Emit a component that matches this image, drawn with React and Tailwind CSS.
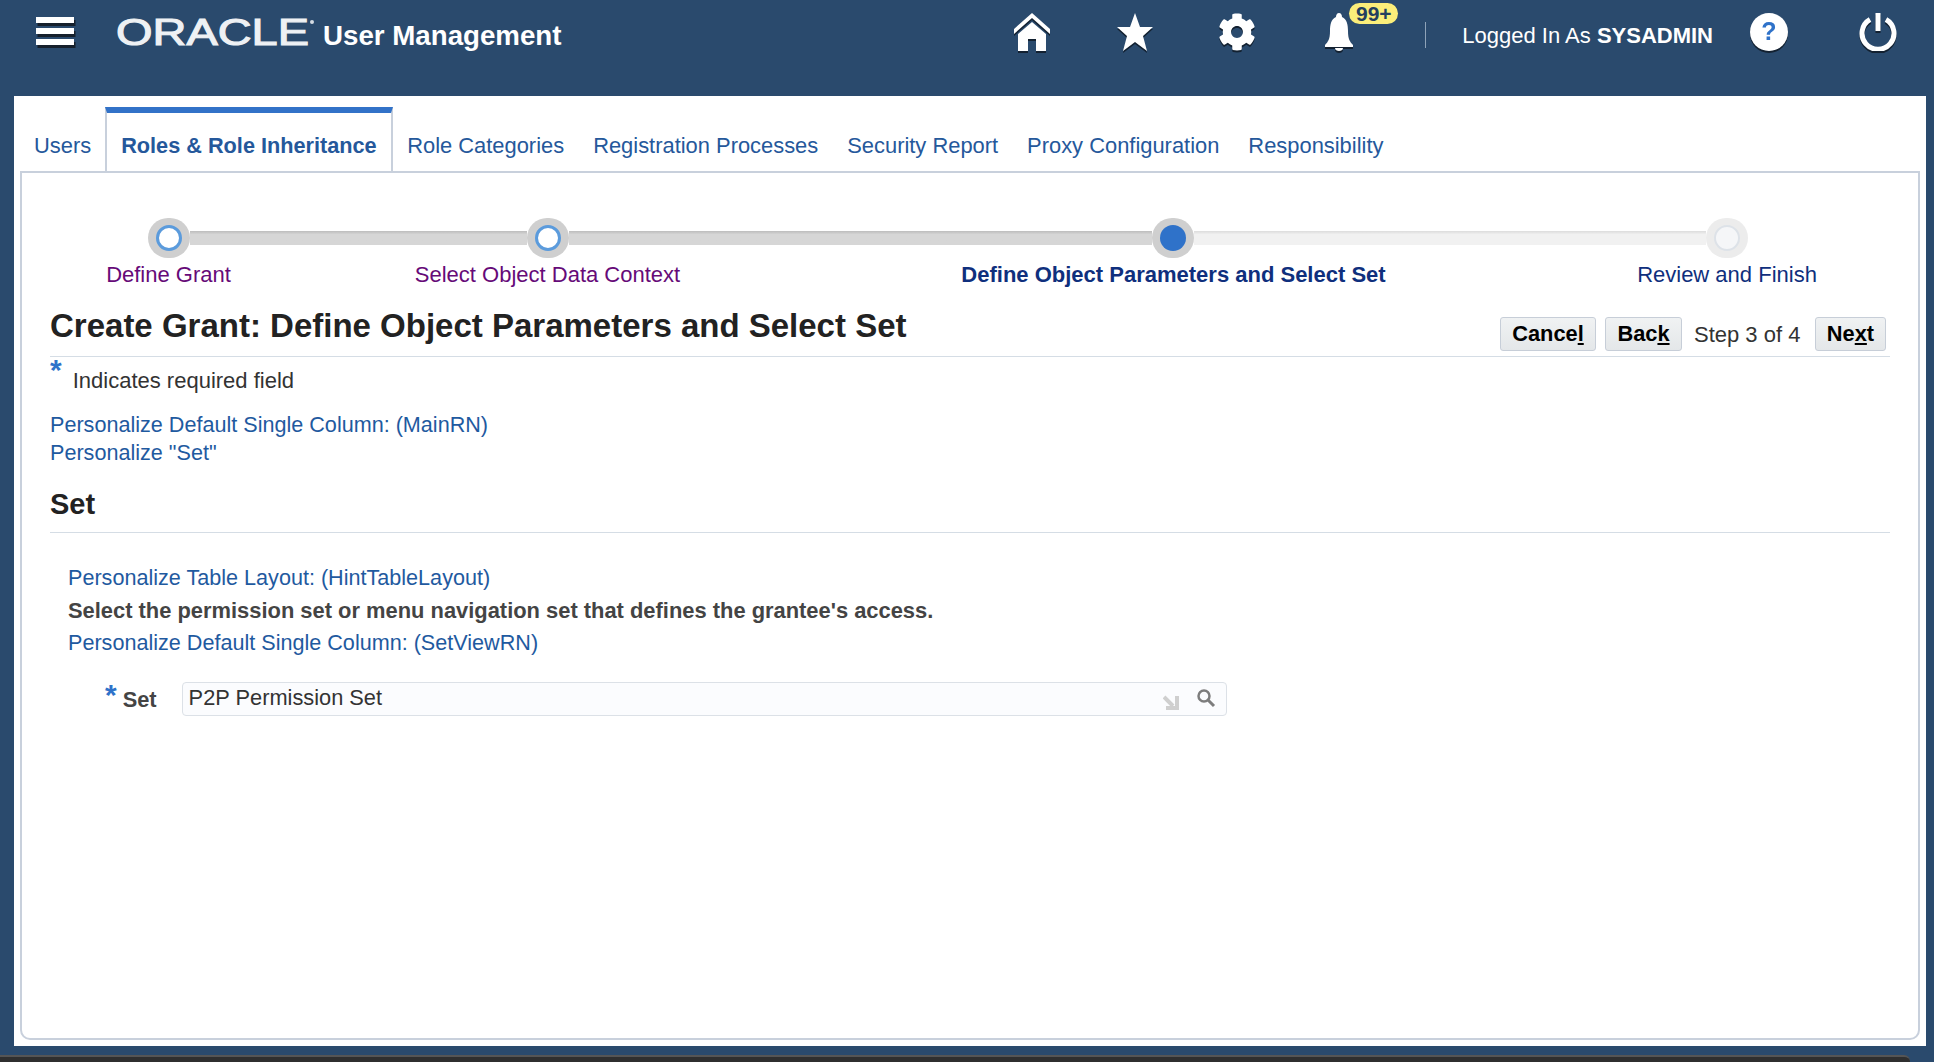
import React from "react";
import { FaCog } from "react-icons/fa";

const tabs = ["Users", "Roles & Role Inheritance", "Role Categories", "Registration Processes", "Security Report", "Proxy Configuration", "Responsibility"];

const Dot = ({ kind }) => (
  <div className={`flex h-[40px] w-[42px] shrink-0 items-center justify-center rounded-full ${kind === "todo" ? "bg-[#ececec]" : "bg-[#cfcfcf]"}`}>
    {kind === "done" && <div className="h-[26px] w-[26px] rounded-full border-[3px] border-[#5b9bdc] bg-white" />}
    {kind === "current" && <div className="h-[26px] w-[26px] rounded-full bg-[#2f72c9]" />}
    {kind === "todo" && <div className="h-[26px] w-[26px] rounded-full border-2 border-[#dde2e8] bg-[#f5f6f8]" />}
  </div>
);

const Line = ({ width, light }) => (
  <div
    className={`h-[14px] ${width} ${
      light ? "bg-gradient-to-b from-[#dcdcdc] to-[#f1f1f1] to-25%" : "bg-gradient-to-b from-[#bcbcbc] to-[#d6d6d6] to-25%"
    }`}
  />
);

const Btn = ({ children, className }) => (
  <button className={`flex h-[34px] items-center justify-center rounded-[3px] border border-[#c7ced8] bg-gradient-to-b from-[#f0f2f3] to-[#e4e7e9] text-[21.8px] font-bold text-black ${className}`}>
    {children}
  </button>
);

const Star = ({ className }) => <span className={`font-bold leading-none text-[#2f72c9] ${className}`}>*</span>;

const Link = ({ children }) => <div className="text-[21.6px] leading-[27.7px] text-[#1f5aa0]">{children}</div>;

export default function App() {
  return (
    <div className="flex h-[1062px] w-full flex-col overflow-hidden bg-[#2a4a6d] font-['Liberation_Sans',Arial,sans-serif]">
      {/* top bar */}
      <header className="flex h-[96px] shrink-0 items-start text-white">
        <svg width="42" height="32" viewBox="0 0 42 32" className="ml-[35px] mt-[16px] shrink-0">
          <path d="M1 3h38v6H1zM1 14h38v6H1zM1 25h38v6H1z" fill="#16202c" transform="translate(1.5 1)" />
          <path d="M1 1h38v6H1zM1 12h38v6H1zM1 23h38v6H1z" fill="#fff" />
        </svg>
        <svg width="200" height="44" viewBox="0 0 200 44" className="ml-[39px] mt-[17px] shrink-0 overflow-visible">
          <text x="0" y="28" textLength="193" lengthAdjust="spacingAndGlyphs" fontSize="37" fill="#eef1f4" stroke="#eef1f4" strokeWidth="1.1" fontFamily="'Liberation Sans', sans-serif">
            ORACLE
          </text>
          <circle cx="196" cy="5" r="2" fill="#d5dbe2" />
        </svg>
        <div className="ml-[7px] mt-[20px] text-[27.7px] font-bold leading-[32px]">User Management</div>

        <div className="ml-auto flex h-[52px] items-start pt-[13px]">
          <svg width="38" height="40" viewBox="0 0 38 40" className="drop-shadow-[0_2px_0_rgba(0,0,0,0.55)]">
            <path d="M19 0 37 16v5L19 5 1 21v-5z" fill="#fff" />
            <path d="M19 9 33 21v17H23V26h-8v12H5V21z" fill="#fff" />
          </svg>
          <svg width="38" height="40" viewBox="0 0 38 40" className="ml-[65px] drop-shadow-[0_2px_0_rgba(0,0,0,0.55)]">
            <path d="M19 0 24 14H37L27 23 31 38 19 29 7 38 11 23 1 14H14z" fill="#fff" />
          </svg>
          <FaCog className="ml-[64px] h-[38px] w-[38px] text-white drop-shadow-[0_2px_0_rgba(0,0,0,0.55)]" />
          <div className="relative ml-[67px] w-[32px]">
            <svg width="32" height="38" viewBox="0 0 32 38" className="drop-shadow-[0_2px_0_rgba(0,0,0,0.55)]">
              <path d="M16 0c2 0 3 2 3 4 5 2 6 8 6 14 0 8 2 11 5 14v2H2v-2c3-3 5-6 5-14 0-6 1-12 6-14 0-2 1-4 3-4z" fill="#fff" />
              <path d="M12 35h8c0 2-2 3-4 3s-4-1-4-3z" fill="#fff" />
            </svg>
            <div className="absolute left-[26px] top-[-10px] flex h-[21px] w-[49px] items-center justify-center rounded-full bg-[#fbee7a] text-[21px] font-bold text-[#24405f]">
              99+
            </div>
          </div>
          <div className="ml-[70px] mt-[9px] h-[26px] w-px bg-[#8fa3b8]" />
          <div className="ml-[36px] mt-[10px] text-[22px] leading-[26px]">
            Logged In As <span className="font-bold">SYSADMIN</span>
          </div>
          <div className="ml-[37px] flex h-[38px] w-[38px] items-center justify-center rounded-full bg-white text-[25px] font-bold text-[#2f72c9] drop-shadow-[0_2px_0_rgba(0,0,0,0.55)]">
            ?
          </div>
          <svg width="38" height="38" viewBox="0 0 38 38" className="ml-[71px] mr-[37px] drop-shadow-[0_2px_0_rgba(0,0,0,0.55)]">
            <path d="M11 6.5a16 16 0 1 0 16 0" fill="none" stroke="#fff" strokeWidth="5" />
            <path d="M19 0v18" fill="none" stroke="#fff" strokeWidth="5" />
          </svg>
        </div>
      </header>

      {/* white sheet */}
      <main className="mx-[8px] ml-[14px] flex min-h-0 flex-1 flex-col bg-white px-[6px] pb-[6px] pt-[11px]">
        <nav className="flex h-[64px] shrink-0 items-end">
          {tabs.map((t, i) =>
            i === 1 ? (
              <div key={t} className="-mb-[2px] flex h-[66px] items-center border-x-2 border-t-[6px] border-x-[#c8d0dc] border-t-[#3272c8] bg-white px-[14px] pt-[7px] text-[21.7px] font-bold text-[#25589b]">
                {t}
              </div>
            ) : (
              <div key={t} className={`flex h-[60px] items-center pt-[10px] text-[21.9px] text-[#25589b] ${i === 0 ? "pl-[14px] pr-[14px]" : "px-[14.5px]"}`}>
                {t}
              </div>
            )
          )}
        </nav>

        <section className="flex min-h-0 flex-1 flex-col rounded-b-[10px] border-2 border-[#c8d0dc] px-[28px]">
          {/* train */}
          <div className="ml-[98px] mt-[45px] flex items-center">
            <Dot kind="done" />
            <Line width="w-[337px]" />
            <Dot kind="done" />
            <Line width="w-[583px]" />
            <Dot kind="current" />
            <Line width="w-[512px]" light />
            <Dot kind="todo" />
          </div>
          <div className="mt-[2px] grid h-[30px] grid-cols-[237px_521px_731px_348px] items-center text-center text-[22px] leading-[30px]">
            <div className="text-[#660a78]">Define Grant</div>
            <div className="text-[#660a78]">Select Object Data Context</div>
            <div className="font-bold text-[#0f2f7d]">Define Object Parameters and Select Set</div>
            <div className="whitespace-nowrap pl-[28px] text-[#0f2f7d]">Review and Finish</div>
          </div>

          {/* page title */}
          <div className="mt-[12px] flex h-[55px] items-end justify-between border-b border-[#d5dde5] pb-[5px]">
            <h1 className="mb-[5px] text-[33px] font-bold leading-[40px] text-[#222]">Create Grant: Define Object Parameters and Select Set</h1>
            <div className="mr-[4px] flex items-center">
              <Btn className="w-[96px]">
                <span>Cance<u>l</u></span>
              </Btn>
              <Btn className="ml-[9px] w-[77px]">
                <span>Bac<u>k</u></span>
              </Btn>
              <span className="ml-[12px] w-[109px] whitespace-nowrap text-[22px] text-[#333]">Step 3 of 4</span>
              <Btn className="ml-[12px] w-[71px]">
                <span>Ne<u>x</u>t</span>
              </Btn>
            </div>
          </div>

          <div className="mt-[5px] flex h-[32px] items-end">
            <Star className="mb-[9px] text-[30px]" />
            <span className="ml-[11px] text-[22px] leading-[27px] text-[#333]">Indicates required field</span>
          </div>

          <div className="mt-[17px]">
            <Link>Personalize Default Single Column: (MainRN)</Link>
            <Link>Personalize "Set"</Link>
          </div>

          <h2 className="mt-[20px] border-b border-[#d5dde5] pb-[10px] text-[29px] font-bold leading-[36px] text-[#222]">Set</h2>

          <div className="ml-[18px] mt-[31px] flex flex-col gap-[5px]">
            <Link>Personalize Table Layout: (HintTableLayout)</Link>
            <div className="text-[21.9px] font-bold leading-[27px] text-[#444]">Select the permission set or menu navigation set that defines the grantee's access.</div>
            <Link>Personalize Default Single Column: (SetViewRN)</Link>
          </div>

          <div className="mt-[25px] flex items-start">
            <Star className="ml-[55px] mt-[-2px] text-[30px]" />
            <span className="ml-[6px] mt-[4px] text-[21.8px] font-bold leading-[27px] text-[#444]">Set</span>
            <div className="ml-[25px] flex h-[34px] w-[1045px] items-center rounded-[4px] border border-[#dce1e7] bg-[#fbfcfe] pl-[6px] pr-[10px]">
              <span className="text-[21.8px] text-[#333]">P2P Permission Set</span>
              <svg width="16" height="16" viewBox="0 0 16 16" className="ml-auto mt-[6px]">
                <path d="M1 3l9 9M14 2v12H3" fill="none" stroke="#cfcfcf" strokeWidth="4" />
              </svg>
              <svg width="20" height="20" viewBox="0 0 20 20" className="ml-[17px] mb-[2px]">
                <circle cx="8" cy="8" r="5.5" fill="none" stroke="#7d7d7d" strokeWidth="2.5" />
                <path d="M12 12l6 6" stroke="#7d7d7d" strokeWidth="3" />
              </svg>
            </div>
          </div>
        </section>
      </main>

      {/* browser strip along the bottom */}
      <div className="mr-[24px] mt-[9px] h-[7px] shrink-0 rounded-tr-[6px] border-t-2 border-[#555] bg-[#2f2f2f]" />
    </div>
  );
}
